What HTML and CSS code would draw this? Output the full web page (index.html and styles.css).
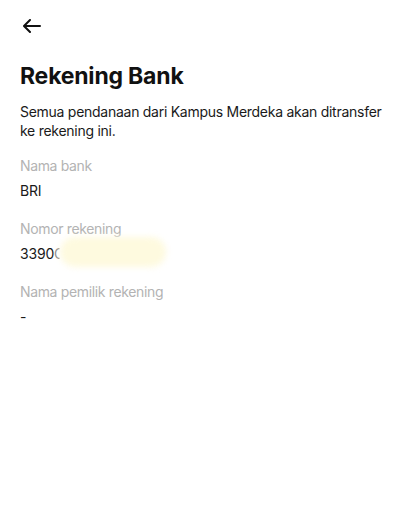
FILE: index.html
```html
<!DOCTYPE html>
<html lang="id">
<head>
<meta charset="utf-8">
<title>Rekening Bank</title>
<link rel="stylesheet" href="styles.css">
</head>
<body>
<main class="page">
  <button class="back" aria-label="Kembali">
    <svg width="18" height="14" viewBox="0 0 18 14" fill="none" stroke="#111" stroke-width="2" stroke-linecap="round" stroke-linejoin="round">
      <path d="M17 7H1.5M7 1L1 7l6 6"/>
    </svg>
  </button>
  <h1 class="title">Rekening Bank</h1>
  <p class="desc">Semua pendanaan dari Kampus Merdeka akan ditransfer ke rekening ini.</p>
  <div class="field">
    <div class="label">Nama bank</div>
    <div class="value">BRI</div>
  </div>
  <div class="field">
    <div class="label">Nomor rekening</div>
    <div class="value redacted-wrap"><span>3390</span><span class="partial">C</span><span class="redact"></span></div>
  </div>
  <div class="field">
    <div class="label">Nama pemilik rekening</div>
    <div class="value">-</div>
  </div>
</main>
</body>
</html>
```
FILE: styles.css
```css
* { box-sizing: border-box; }
html, body { margin: 0; background: #fff; }
body { font-family: Inter, "Noto Sans", sans-serif; color: #111; }
.page { padding: 16px 20px 0 20px; display: flex; flex-direction: column; }
.back { border: 0; background: none; padding: 0; margin: 3px 0 0 3px; width: 18px; height: 14px; display: flex; cursor: pointer; }
.title { margin: 28px 0 0 0; font-size: 23px; font-weight: 700; letter-spacing: -0.2px; line-height: 30px; color: #111; }
.desc { margin: 11px 0 0 0; font-size: 14px; line-height: 19px; letter-spacing: -0.27px; color: #1a1a1a; }
.field { margin-top: 16px; display: flex; flex-direction: column; }
.field + .field { margin-top: 19px; }
.label { font-size: 14px; line-height: 19px; color: #b3b3b3; letter-spacing: -0.35px; }
.value { margin-top: 6px; font-size: 14px; line-height: 19px; color: #1a1a1a; letter-spacing: -0.2px; }
.redacted-wrap { position: relative; display: flex; align-items: center; }
.partial { color: #888; clip-path: inset(0 45% 0 0); }
.redact { position: absolute; left: 40px; top: -7px; width: 106px; height: 30px; border-radius: 15px; background: #fefadf; filter: blur(3px); }
```
